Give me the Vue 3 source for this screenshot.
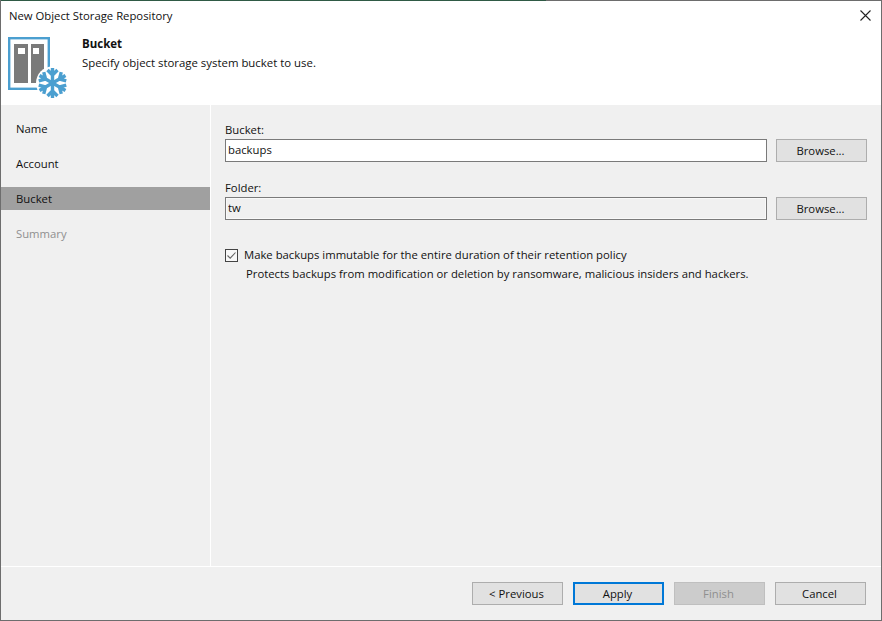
<template>
  <div class="dialog">
    <div class="topline"></div>
    <div class="titlebar">
      <span class="title">New Object Storage Repository</span>
      <svg class="close" width="11" height="11" viewBox="0 0 11 11">
        <path d="M0.5 0.5 L10.5 10.5 M10.5 0.5 L0.5 10.5" stroke="#222" stroke-width="1.1" fill="none" />
      </svg>
    </div>

    <div class="header">
      <svg class="logo" width="62" height="62" viewBox="0 0 62 62">
        <rect x="1.2" y="1.2" width="39.6" height="50.6" fill="#fff" stroke="#4b9fd0" stroke-width="2.4" />
        <rect x="6" y="7" width="14" height="39" fill="#7a7a7a" />
        <rect x="23" y="7" width="13" height="39" fill="#7a7a7a" />
        <rect x="10" y="11" width="7" height="6" fill="#fff" />
        <rect x="25" y="11" width="6" height="6" fill="#fff" />
        <circle cx="44.5" cy="46" r="16.5" fill="#fff" />
        <g stroke="#4b9fd0" stroke-width="3.4" fill="none">
          <path d="M44.5 31 V61 M39.5 33 L44.5 38 L49.5 33 M39.5 59 L44.5 54 L49.5 59" />
          <path d="M44.5 31 V61 M39.5 33 L44.5 38 L49.5 33 M39.5 59 L44.5 54 L49.5 59" transform="rotate(60 44.5 46)" />
          <path d="M44.5 31 V61 M39.5 33 L44.5 38 L49.5 33 M39.5 59 L44.5 54 L49.5 59" transform="rotate(120 44.5 46)" />
        </g>
      </svg>
      <div class="header-text">
        <div class="header-title">Bucket</div>
        <div class="header-sub">Specify object storage system bucket to use.</div>
      </div>
    </div>

    <div class="middle">
      <nav class="steps">
        <div
          v-for="s in steps"
          :key="s.name"
          class="step"
          :class="{ active: s.name === 'Bucket', disabled: s.name === 'Summary' }"
        >{{ s.name }}</div>
      </nav>

      <div class="content">
        <label class="field-label">Bucket:</label>
        <div class="field-row">
          <input class="textbox" value="backups" />
          <button class="btn browse">Browse...</button>
        </div>

        <label class="field-label second">Folder:</label>
        <div class="field-row">
          <input class="textbox grey" value="tw" />
          <button class="btn browse">Browse...</button>
        </div>

        <div class="check-row">
          <svg class="checkbox" width="13" height="13" viewBox="0 0 13 13">
            <rect x="0.5" y="0.5" width="12" height="12" fill="#f8f8f8" stroke="#444" />
            <path d="M2.5 6.5 L5.2 9.2 L10.5 3.5" stroke="#666" stroke-width="1.1" fill="none" />
          </svg>
          <span>Make backups immutable for the entire duration of their retention policy</span>
        </div>
        <div class="check-note">Protects backups from modification or deletion by ransomware, malicious insiders and hackers.</div>
      </div>
    </div>

    <div class="footer">
      <button class="btn">&lt; Previous</button>
      <button class="btn focused">Apply</button>
      <button class="btn off" disabled>Finish</button>
      <button class="btn">Cancel</button>
    </div>
  </div>
</template>

<script setup>
const steps = [{ name: 'Name' }, { name: 'Account' }, { name: 'Bucket' }, { name: 'Summary' }]
</script>

<style>
html,
body {
  margin: 0;
  padding: 0;
}
</style>

<style scoped>
.dialog {
  width: 882px;
  height: 621px;
  box-sizing: border-box;
  display: flex;
  flex-direction: column;
  background: #f0f0f0;
  border: 1px solid #6d6d6d;
  border-top: 0;
  font-family: "Open Sans", "Noto Sans", sans-serif;
  font-size: 11.3px;
  color: #111;
}

.topline {
  height: 1px;
  flex: none;
  background: linear-gradient(to right, #2f5a45 545px, #6d6d6d 545px);
}

.titlebar {
  height: 28px;
  flex: none;
  background: #fff;
  display: flex;
  align-items: center;
  justify-content: space-between;
  padding: 0 10px 0 8px;
}

.close {
  display: block;
}

.header {
  height: 76px;
  flex: none;
  background: #fff;
  display: flex;
  align-items: flex-start;
}

.logo {
  margin: 8px 0 0 7px;
  flex: none;
}

.header-text {
  margin: 7px 0 0 12px;
}

.header-title {
  font-weight: 700;
  font-size: 11.5px;
  line-height: 16px;
}

.header-sub {
  margin-top: 3px;
  font-size: 11.4px;
  line-height: 16px;
}

.middle {
  flex: 1;
  display: flex;
  min-height: 0;
}

.steps {
  width: 209px;
  flex: none;
  padding-top: 12px;
  border-right: 1px solid #fff;
}

.step {
  height: 23px;
  margin-bottom: 12px;
  line-height: 23px;
  padding-left: 15px;
}

.step.active {
  background: #a0a0a0;
}

.step.disabled {
  color: #8f8f8f;
}

.content {
  flex: 1;
  padding: 17px 14px 0 14px;
}

.field-label {
  display: block;
  line-height: 16px;
}

.field-label.second {
  margin-top: 18px;
}

.field-row {
  display: flex;
  gap: 9px;
  margin-top: 1px;
}

.textbox {
  flex: 1;
  min-width: 0;
  height: 23px;
  box-sizing: border-box;
  border: 1px solid #7a7a7a;
  padding: 0 2px 2px;
  background: #fff;
  font: inherit;
  color: inherit;
  outline: none;
}

.textbox.grey {
  background: #f0f0f0;
  box-shadow: inset 0 0 0 1px #f9f9f9;
}

.btn {
  width: 91px;
  height: 23px;
  box-sizing: border-box;
  border: 1px solid #adadad;
  background: #e1e1e1;
  font: inherit;
  color: #111;
  padding: 0 2px 0 0;
}

.btn.focused {
  border: 2px solid #0078d7;
}

.btn.off {
  background: #cccccc;
  border-color: #bfbfbf;
  color: #8f8f8f;
}

.check-row {
  display: flex;
  align-items: center;
  gap: 6px;
  margin-top: 27px;
  line-height: 16px;
}

.checkbox {
  flex: none;
}

.check-note {
  margin: 3px 0 0 21px;
  line-height: 16px;
}

.footer {
  height: 54px;
  flex: none;
  box-sizing: border-box;
  border-top: 1px solid #fff;
  display: flex;
  justify-content: flex-end;
  align-items: flex-start;
  gap: 10px;
  padding: 15px 15px 0 0;
}
</style>
